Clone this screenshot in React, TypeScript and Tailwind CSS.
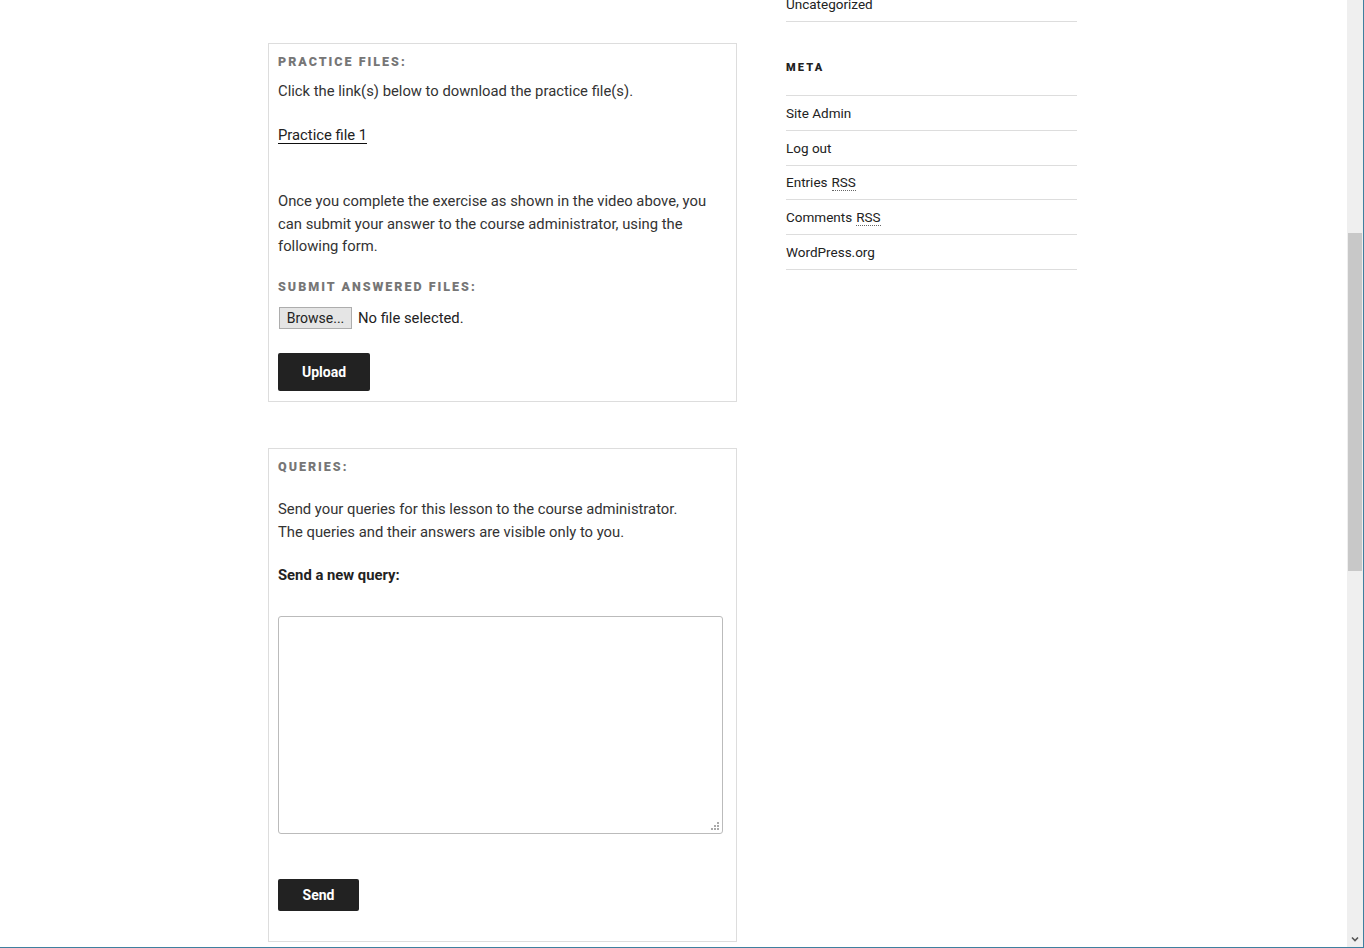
import React from 'react';

const font = { fontFamily: 'Roboto, "Liberation Sans", sans-serif' };

function Heading({ children }: { children: React.ReactNode }) {
    return (
        <h3 className="text-[12.5px] leading-[18px] font-black uppercase tracking-[0.16em] text-[#767676]">
            {children}
        </h3>
    );
}

function DarkButton({ label, className }: { label: string; className: string }) {
    return (
        <button className={`bg-[#222] text-white text-[14px] font-bold rounded-[2px] ${className}`}>
            {label}
        </button>
    );
}

export default function App() {
    const metaLinks = [
        { text: 'Site Admin' },
        { text: 'Log out' },
        { text: 'Entries', abbr: 'RSS' },
        { text: 'Comments', abbr: 'RSS' },
        { text: 'WordPress.org' },
    ];

    return (
        <div
            className="flex w-[1364px] h-[948px] overflow-hidden bg-white border-r border-b border-[#3f7f9f] text-[#333]"
            style={font}
        >
            {/* Page */}
            <div className="flex-1 flex pl-[268px] gap-[49px]">
                {/* Main column */}
                <div className="w-[469px] pt-[43px]">
                    {/* Practice files */}
                    <div className="border border-[#ddd] pl-[9px] pr-[14px] pt-[9px] pb-[10px]">
                        <Heading>Practice files:</Heading>
                        <p className="mt-[9px] text-[14.8px] leading-[22.5px]">
                            Click the link(s) below to download the practice file(s).
                        </p>
                        <p className="mt-[21.5px] text-[14.8px] leading-[22.5px]">
                            <a className="text-[#222] shadow-[inset_0_-1px_0_#0f0f0f]">Practice file 1</a>
                        </p>
                        <p className="mt-[43.5px] text-[14.8px] leading-[22.5px]">
                            Once you complete the exercise as shown in the video above, you can submit your answer to the course administrator, using the following form.
                        </p>
                        <div className="mt-[20.5px]">
                            <Heading>Submit answered files:</Heading>
                        </div>
                        <div className="mt-[11px] flex items-center gap-[6px]">
                            <button className="ml-px h-[22px] w-[73px] bg-[#e5e5e5] border border-[#adadad] text-[14px] text-[#222]">
                                Browse...
                            </button>
                            <span className="text-[14.8px] text-[#222]">No file selected.</span>
                        </div>
                        <DarkButton label="Upload" className="mt-[24px] w-[92px] h-[38px]" />
                    </div>

                    {/* Queries */}
                    <div className="mt-[46px] border border-[#ddd] pl-[9px] pr-[14px] pt-[9px] pb-[30px]">
                        <Heading>Queries:</Heading>
                        <p className="mt-[22px] text-[14.8px] leading-[22.5px]">
                            Send your queries for this lesson to the course administrator.
                            <br />
                            The queries and their answers are visible only to you.
                        </p>
                        <p className="mt-[21px] text-[14.8px] leading-[22.5px] font-bold text-[#222]">Send a new query:</p>
                        <div className="relative mt-[29.5px] w-[445px] h-[218px]">
                            <textarea className="w-full h-full border border-[#bbb] rounded-[3px] resize-none bg-white" />
                            <svg className="absolute right-[4px] bottom-[4px]" width="8" height="8" viewBox="0 0 8 8">
                                <rect x="6" y="0" width="2" height="2" fill="#aaa" />
                                <rect x="3" y="3" width="2" height="2" fill="#aaa" />
                                <rect x="6" y="3" width="2" height="2" fill="#aaa" />
                                <rect x="0" y="6" width="2" height="2" fill="#aaa" />
                                <rect x="3" y="6" width="2" height="2" fill="#aaa" />
                                <rect x="6" y="6" width="2" height="2" fill="#aaa" />
                            </svg>
                        </div>
                        <DarkButton label="Send" className="mt-[45px] w-[81px] h-[32px] block" />
                    </div>
                </div>

                {/* Sidebar */}
                <aside className="w-[291px] -mt-[13px]">
                    <div className="h-[35px] border-b border-[#ddd] text-[13.5px] text-[#222] flex items-center">Uncategorized</div>
                    <h2 className="mt-[38px] text-[11px] leading-[16px] font-black uppercase tracking-[0.2em] text-[#222]">Meta</h2>
                    <ul className="mt-[19px] border-t border-[#ddd]">
                        {metaLinks.map((l) => (
                            <li key={l.text} className="h-[34.8px] border-b border-[#ddd] flex items-center text-[13.5px] text-[#222]">
                                <span>{l.text}</span>
                                {l.abbr && (
                                    <abbr className="ml-[4px] no-underline border-b border-dotted border-[#666] leading-[16px]">{l.abbr}</abbr>
                                )}
                            </li>
                        ))}
                    </ul>
                </aside>
            </div>

            {/* Scrollbar */}
            <div className="w-[16px] bg-[#efefef] flex flex-col">
                <div className="h-[233px]" />
                <div className="h-[338px] mx-[1px] bg-[#c8c8c8]" />
                <div className="flex-1" />
                <div className="h-[16px] flex items-center justify-center">
                    <svg width="8" height="6" viewBox="0 0 8 6">
                        <path d="M1 1.5 L4 4.5 L7 1.5" stroke="#555" strokeWidth="1.6" fill="none" />
                    </svg>
                </div>
            </div>
        </div>
    );
}
